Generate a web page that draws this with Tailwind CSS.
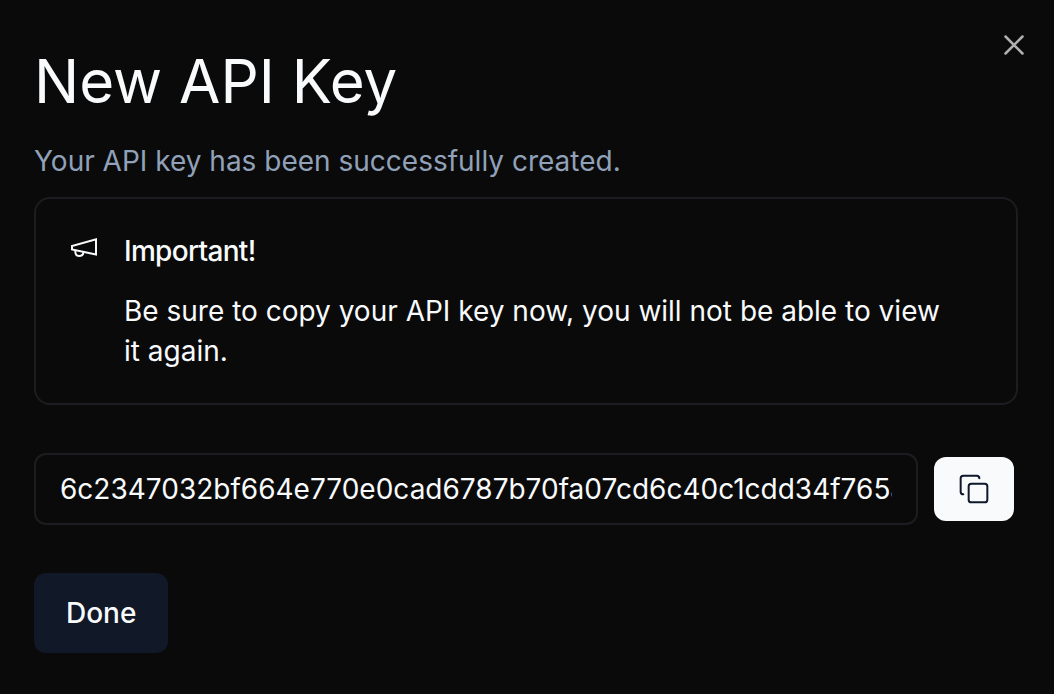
<!DOCTYPE html>
<html lang="en" class="bg-[#0a0a0a]">
<head>
<meta charset="utf-8">
<meta name="viewport" content="width=device-width, initial-scale=1">
<title>New API Key</title>
<script src="https://cdn.jsdelivr.net/npm/@tailwindcss/browser@4"></script>
</head>
<body class="min-h-screen bg-[#0a0a0a] text-slate-50 font-['Inter',sans-serif]">
<main role="dialog" aria-labelledby="title" class="relative flex flex-col pt-[45px] pb-10 pl-[34px] pr-9">
  <button type="button" aria-label="Close" class="absolute top-[29px] right-6 size-8 text-[#b0b0b1]">
    <svg class="size-8" viewBox="0 0 32 32" fill="none" stroke="currentColor" stroke-width="2.5" stroke-linecap="round"><path d="M24.500 7.500l-17 17M7.500 7.500l17 17"/></svg>
  </button>
  <h1 id="title" class="text-[60px] leading-[72px]">New API Key</h1>
  <p class="mt-6 text-[28px] leading-10 text-slate-400">Your API key has been successfully created.</p>
  <section class="mt-4 flex gap-6 rounded-2xl border-2 border-[#1d1d21] p-8">
    <svg class="size-8 shrink-0" viewBox="0 0 32 32" fill="none" stroke="currentColor" stroke-width="2"><path d="M28 8.300v15.200L4 18.500v-3.500z"/><path d="M7.300 19.500v1c0 2.700 1.700 4.500 4 4.500s3.900-1.300 4.100-3.700"/></svg>
    <div class="pr-8">
      <h2 class="text-[28px] leading-10 font-medium tracking-tight">Important!</h2>
      <p class="mt-5 text-[28px] leading-10">Be sure to copy your API key now, you will not be able to view it again.</p>
    </div>
  </section>
  <div class="mt-12 flex items-center gap-4 pr-1">
    <input aria-label="API key" readonly value="6c2347032bf664e770e0cad6787b70fa07cd6c40c1cdd34f765a91" class="h-18 min-w-0 flex-1 rounded-xl border-2 border-[#1d1d21] px-6 text-[28px]">
    <button type="button" aria-label="Copy" class="flex h-16 w-20 items-center justify-center rounded-xl bg-slate-50 text-slate-900">
      <svg class="size-8" viewBox="0 0 24 24" fill="none" stroke="currentColor" stroke-width="1.5" stroke-linecap="round" stroke-linejoin="round"><rect x="8" y="8" width="14" height="14" rx="2"/><path d="M4 16c-1.1 0-2-.9-2-2V4c0-1.1.9-2 2-2h10c1.1 0 2 .9 2 2"/></svg>
    </button>
  </div>
  <button type="button" class="mt-12 h-20 self-start rounded-xl bg-[#111827] px-8 text-[28px] font-medium">Done</button>
</main>
</body>
</html>
